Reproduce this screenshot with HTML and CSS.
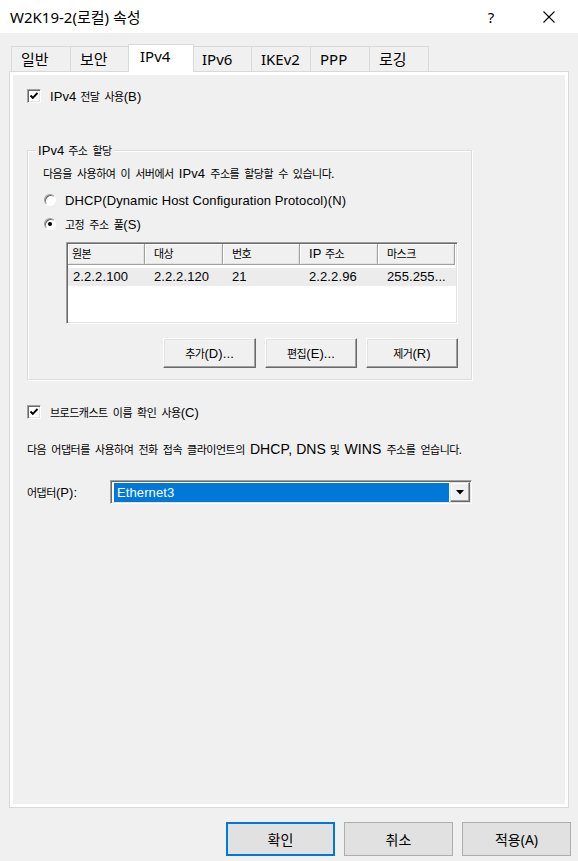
FILE: index.html
```html
<!DOCTYPE html>
<html lang="ko">
<head>
    <meta charset="UTF-8">
    <meta name="viewport" content="width=device-width, initial-scale=1.0">
    <title>W2K19-2(로컬) 속성</title>
    <link rel="stylesheet" href="styles.css">
</head>
<body>
    <div class="window">
        <div class="titlebar">
            <span class="title">W2K19-2(로컬) 속성</span>
            <span class="help">?</span>
            <span class="close">
                <svg width="12" height="12" viewBox="0 0 12 12"><path d="M0.5 0.5L11.5 11.5M11.5 0.5L0.5 11.5" stroke="#000" stroke-width="1.1" fill="none"/></svg>
            </span>
        </div>

        <div class="tabs">
            <div class="tab">일반</div>
            <div class="tab">보안</div>
            <div class="tab active">IPv4</div>
            <div class="tab">IPv6</div>
            <div class="tab">IKEv2</div>
            <div class="tab">PPP</div>
            <div class="tab">로깅</div>
        </div>

        <div class="panel">
            <div class="check-row">
                <span class="checkbox">
                    <svg width="10" height="10" viewBox="0 0 10 10"><path d="M1.5 4.5L3.8 6.8L8.5 2" stroke="#000" stroke-width="1.9" fill="none"/></svg>
                </span>
                <span>IPv4 <span class="k">전달 사용</span>(B)</span>
            </div>

            <div class="group">
                <div class="group-title">IPv4 <span class="k">주소 할당</span></div>
                <div class="desc"><span class="k">다음을 사용하여 이 서버에서 </span>IPv4<span class="k"> 주소를 할당할 수 있습니다.</span></div>

                <div class="radio-row first">
                    <span class="radio"></span>
                    <span>DHCP(Dynamic Host Configuration Protocol)(N)</span>
                </div>
                <div class="radio-row">
                    <span class="radio on"></span>
                    <span><span class="k">고정 주소 풀</span>(S)</span>
                </div>

                <div class="list">
                    <div class="list-head">
                        <div class="col"><span class="k">원본</span></div>
                        <div class="col"><span class="k">대상</span></div>
                        <div class="col"><span class="k">번호</span></div>
                        <div class="col">IP <span class="k">주소</span></div>
                        <div class="col"><span class="k">마스크</span></div>
                    </div>
                    <div class="list-row">
                        <div class="cell">2.2.2.100</div>
                        <div class="cell">2.2.2.120</div>
                        <div class="cell">21</div>
                        <div class="cell">2.2.2.96</div>
                        <div class="cell">255.255...</div>
                    </div>
                </div>

                <div class="group-buttons">
                    <button class="btn wide"><span class="k">추가</span>(D)...</button>
                    <button class="btn"><span class="k">편집</span>(E)...</button>
                    <button class="btn"><span class="k">제거</span>(R)</button>
                </div>
            </div>

            <div class="check-row second">
                <span class="checkbox">
                    <svg width="10" height="10" viewBox="0 0 10 10"><path d="M1.5 4.5L3.8 6.8L8.5 2" stroke="#000" stroke-width="1.9" fill="none"/></svg>
                </span>
                <span><span class="k">브로드캐스트 이름 확인 사용</span>(C)</span>
            </div>

            <div class="desc wide-desc"><span class="k">다음 어댑터를 사용하여 전화 접속 클라이언트의 </span><span class="big">DHCP, DNS</span> <span class="k">및 </span><span class="big">WINS</span><span class="k"> 주소를 얻습니다.</span></div>

            <div class="adapter-row">
                <span class="adapter-label"><span class="k">어댑터</span>(P):</span>
                <div class="combo">
                    <div class="combo-value">Ethernet3</div>
                    <div class="combo-arrow">
                        <svg width="8" height="5" viewBox="0 0 8 5"><path d="M0 0H8L4 4.5Z" fill="#000"/></svg>
                    </div>
                </div>
            </div>
        </div>

        <div class="footer">
            <button class="fbtn default">확인</button>
            <button class="fbtn">취소</button>
            <button class="fbtn">적용(A)</button>
        </div>
    </div>
</body>
</html>
```

FILE: styles.css
```css
body {
    margin: 0;
    background: #f0f0f0;
    font-family: "Liberation Sans", Arial, "Noto Sans CJK KR", sans-serif;
    font-size: 13px;
    letter-spacing: 0.1px;
    color: #000;
}

.window {
    width: 578px;
    height: 861px;
    overflow: hidden;
    display: flex;
    flex-direction: column;
}

/* korean bits are drawn smaller, like Gulim in the dialog font */
.k {
    font-family: "Noto Sans CJK KR", sans-serif;
    font-size: 11px;
    letter-spacing: -0.5px;
    word-spacing: 2.5px;
}

.big {
    font-size: 14px;
}

.titlebar {
    height: 33px;
    flex-shrink: 0;
    background: #fff;
    display: flex;
    align-items: center;
    font-family: "Noto Sans", "Noto Sans CJK KR", sans-serif;
    font-size: 15px;
    letter-spacing: 0;
}

.title {
    flex: 1;
    padding-left: 10px;
}

.help {
    width: 30px;
    text-align: center;
    margin-right: 28px;
}

.close {
    width: 30px;
    display: flex;
    justify-content: center;
    margin-right: 14px;
}

.tabs {
    display: flex;
    align-items: flex-end;
    height: 38px;
    flex-shrink: 0;
    padding-left: 11px;
    box-sizing: border-box;
    font-family: "Noto Sans", "Noto Sans CJK KR", sans-serif;
    font-size: 15px;
    letter-spacing: 0;
}

.tab {
    width: 60px;
    height: 25px;
    box-sizing: border-box;
    border: 1px solid #d9d9d9;
    border-bottom: none;
    margin-left: -1px;
    padding: 2px 0 0 9px;
    line-height: 20px;
}

.tab:first-child {
    margin-left: 0;
}

.tab.active {
    width: 66px;
    height: 28px;
    background: #fff;
    margin: 0 -1px -1px -2px;
    padding: 1px 0 0 11px;
    position: relative;
    z-index: 1;
}

.panel {
    margin-left: 9px;
    width: 560px;
    height: 737px;
    flex-shrink: 0;
    box-sizing: border-box;
    border: 1px solid #d9d9d9;
    box-shadow: inset 0 0 0 3px #fff;
    padding: 16px 0 0 17px;
}

.check-row {
    display: flex;
    align-items: center;
    height: 16px;
    line-height: 16px;
}

.check-row.second {
    margin-top: 24px;
}

.checkbox {
    width: 14px;
    height: 14px;
    box-sizing: border-box;
    background: #fff;
    border: 1px solid;
    border-color: #a0a0a0 #fff #fff #a0a0a0;
    box-shadow: inset 1px 1px 0 #696969, inset -1px -1px 0 #e3e3e3;
    margin-right: 9px;
    display: flex;
    align-items: center;
    justify-content: center;
}

.group {
    margin-top: 46px;
    width: 445px;
    box-sizing: border-box;
    border: 1px solid #dcdcdc;
    box-shadow: inset 1px 1px 0 #fff, 1px 1px 0 #fff;
    padding: 0 13px 11px 15px;
    display: flex;
    flex-direction: column;
}

.group-title {
    align-self: flex-start;
    margin: -9px 0 0 -7px;
    padding: 0 2px;
    line-height: 16px;
    background: #f0f0f0;
}

.desc {
    margin-top: 6px;
    line-height: 16px;
}

.wide-desc {
    margin-top: 21px;
}

.radio-row {
    display: flex;
    align-items: center;
    height: 16px;
    margin-top: 8px;
}

.radio-row.first {
    margin-top: 10px;
}

.radio {
    width: 12px;
    height: 12px;
    box-sizing: border-box;
    margin: 0 9px 0 1px;
    border-radius: 50%;
    background: #fff;
    border: 1px solid;
    border-color: #a0a0a0 #fff #fff #a0a0a0;
    box-shadow: inset 1px 1px 0 #696969;
    display: flex;
    align-items: center;
    justify-content: center;
}

.radio.on::after {
    content: "";
    width: 4px;
    height: 4px;
    border-radius: 50%;
    background: #000;
}

.list {
    margin: 10px 0 0 23px;
    width: 392px;
    height: 82px;
    box-sizing: border-box;
    background: #fff;
    border: 1px solid;
    border-color: #a0a0a0 #fff #fff #a0a0a0;
    box-shadow: inset 1px 1px 0 #696969, inset -1px -1px 0 #e3e3e3;
    padding: 1px;
}

.list-head,
.list-row {
    display: grid;
    grid-template-columns: 77px 78px 77px 78px 77px;
}

.list-head {
    height: 21px;
}

.col {
    background: #f0f0f0;
    box-sizing: border-box;
    border-right: 1px solid #a0a0a0;
    border-bottom: 1px solid #a0a0a0;
    box-shadow: inset 1px 1px 0 #fff, inset -1px -1px 0 #e3e3e3;
    padding-left: 9px;
    line-height: 19px;
}

.col:first-child {
    padding-left: 4px;
}

.list-row {
    margin-top: 3px;
    height: 18px;
    line-height: 18px;
    background: #ececec;
}

.cell {
    padding-left: 9px;
    white-space: nowrap;
}

.cell:first-child {
    padding-left: 5px;
}

.group-buttons {
    display: flex;
    justify-content: flex-end;
    gap: 9px;
    margin-top: 14px;
}

.btn {
    width: 92px;
    height: 30px;
    background: #f0f0f0;
    border: 1px solid;
    border-color: #fff #696969 #696969 #fff;
    box-shadow: inset -1px -1px 0 #a0a0a0, inset 1px 1px 0 #e3e3e3;
    font-family: inherit;
    font-size: 13px;
    letter-spacing: 0.1px;
    color: #000;
    padding: 0;
}

.btn.wide {
    width: 93px;
}

.adapter-row {
    display: flex;
    align-items: center;
    margin-top: 22px;
    height: 24px;
}

.adapter-label {
    width: 83px;
}

.combo {
    width: 362px;
    height: 24px;
    box-sizing: border-box;
    background: #fff;
    border: 1px solid;
    border-color: #a0a0a0 #fff #fff #a0a0a0;
    box-shadow: inset 1px 1px 0 #696969, inset -1px -1px 0 #e3e3e3;
    padding: 1px 1px 1px 2px;
    display: flex;
    gap: 1px;
}

.combo-value {
    flex: 1;
    margin: 1px 0 0 1px;
    background: #0078d7;
    color: #fff;
    padding-left: 3px;
    line-height: 19px;
}

.combo-arrow {
    width: 20px;
    box-sizing: border-box;
    background: #f0f0f0;
    border: 1px solid;
    border-color: #e3e3e3 #696969 #696969 #e3e3e3;
    box-shadow: inset -1px -1px 0 #a0a0a0, inset 1px 1px 0 #fff;
    display: flex;
    align-items: center;
    justify-content: center;
}

.footer {
    display: flex;
    justify-content: flex-end;
    gap: 9px;
    padding: 14px 7px 0 0;
}

.fbtn {
    width: 109px;
    height: 34px;
    background: #e1e1e1;
    border: 1px solid #adadad;
    font-family: "Noto Sans", "Noto Sans CJK KR", sans-serif;
    font-size: 14px;
    color: #000;
    padding: 0;
}

.fbtn.default {
    border-color: #0078d7;
    box-shadow: inset 0 0 0 1px #0078d7;
}
```
